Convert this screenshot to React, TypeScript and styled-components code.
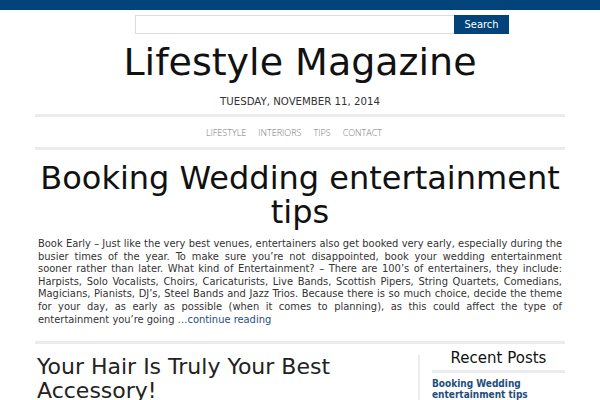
import React from "react";
import styled, { createGlobalStyle } from "styled-components";

const Global = createGlobalStyle`
  html, body { margin: 0; padding: 0; background: #fff; }
  body { font-family: "DejaVu Sans", "Liberation Sans", sans-serif; color: #111; }
  * { box-sizing: border-box; }
`;

const condensed = `"DejaVu Sans Condensed", "DejaVu Sans", sans-serif`;

const TopBar = styled.div`
  height: 10px;
  background: #024379;
`;

const Wrapper = styled.div`
  width: 530px;
  margin: 0 auto;
`;

const SearchForm = styled.form`
  display: flex;
  margin: 5px 0 0 100px;
  height: 19px;
`;

const SearchInput = styled.input`
  width: 319px;
  height: 19px;
  border: 1px solid #ddd;
  border-right: none;
  padding: 0 4px;
  outline: none;
`;

const SearchButton = styled.button`
  width: 55px;
  height: 19px;
  border: none;
  background: #024379;
  color: #fff;
  font-family: ${condensed};
  font-stretch: condensed;
  font-size: 11px;
  padding: 0;
  cursor: pointer;
`;

const SiteTitle = styled.h1`
  margin: 7px 0 0;
  font-size: 38px;
  font-weight: normal;
  line-height: 43px;
  text-align: center;
  color: #111;
`;

const DateLine = styled.div`
  margin-top: 12px;
  font-size: 10.2px;
  line-height: 12px;
  text-align: center;
  color: #333;
  text-transform: uppercase;
`;

const Rule = styled.div<{ $mt?: number }>`
  height: 3px;
  background: #ececec;
  margin-top: ${(p) => p.$mt ?? 0}px;
`;

const Nav = styled.nav`
  display: flex;
  justify-content: center;
  gap: 12px;
  height: 30px;
  align-items: center;
  padding-right: 12px;
`;

const NavLink = styled.a`
  font-family: "Open Sans", "Liberation Sans", sans-serif;
  font-weight: 300;
  font-size: 9px;
  color: #777;
  text-decoration: none;
  text-transform: uppercase;
`;

const Post = styled.article`
  padding: 0 3px;
`;

const PostTitle = styled.h2`
  margin: 11px 0 0;
  font-size: 32px;
  font-weight: normal;
  line-height: 34px;
  text-align: center;
  color: #111;
`;

const PostBody = styled.p`
  margin: 9px 0 0;
  font-family: ${condensed};
  font-stretch: condensed;
  font-size: 11px;
  line-height: 12.6px;
  text-align: justify;
  color: #333;
`;

const NoBreak = styled.span`
  white-space: nowrap;
`;

const More = styled.a`
  color: #1e4e7e;
  text-decoration: none;
`;

const Columns = styled.div`
  display: flex;
  align-items: flex-start;
  margin-top: 7px;
`;

const MainCol = styled.div`
  width: 385px;
  margin-top: 4px;
  border-right: 2px solid #ececec;
  padding-left: 2px;
`;

const SecondTitle = styled.h2`
  margin: 0;
  font-size: 22px;
  font-weight: normal;
  line-height: 24px;
  color: #222;
`;

const Sidebar = styled.aside`
  flex: 1;
  margin-left: 12px;
`;

const WidgetTitle = styled.h3`
  margin: 0;
  font-size: 15px;
  font-weight: normal;
  line-height: 15px;
  padding-bottom: 4px;
  text-align: center;
  color: #111;
  border-bottom: 3px solid #ececec;
`;

const WidgetLink = styled.a`
  display: block;
  margin-top: 5px;
  font-family: ${condensed};
  font-stretch: condensed;
  font-size: 10px;
  line-height: 11px;
  font-weight: bold;
  color: #1e4e7e;
  text-decoration: none;
`;

export default function App() {
  return (
    <>
      <Global />
      <TopBar />
      <Wrapper>
        <SearchForm onSubmit={(e) => e.preventDefault()}>
          <SearchInput type="text" />
          <SearchButton type="submit">Search</SearchButton>
        </SearchForm>
        <SiteTitle>Lifestyle Magazine</SiteTitle>
        <DateLine>Tuesday, November 11, 2014</DateLine>
        <Rule $mt={6} />
        <Nav>
          <NavLink href="#">Lifestyle</NavLink>
          <NavLink href="#">Interiors</NavLink>
          <NavLink href="#">Tips</NavLink>
          <NavLink href="#">Contact</NavLink>
        </Nav>
        <Rule />
        <Post>
          <PostTitle>Booking Wedding entertainment tips</PostTitle>
          <PostBody>
            Book Early – Just like the very best venues, entertainers also get booked very early, especially during the busier times of the year. To make sure you’re not disappointed, book your wedding entertainment <NoBreak>sooner rather</NoBreak> than later. What kind of Entertainment? – There are 100’s of entertainers, they include: Harpists, Solo Vocalists, Choirs, Caricaturists, Live Bands, Scottish Pipers, String Quartets, Comedians, Magicians, Pianists, DJ’s, Steel Bands and Jazz Trios. Because there is so much choice, decide the theme for your day, as early as possible (when it comes to planning), as this could affect the type of entertainment you’re going <More href="#">…continue reading</More>
          </PostBody>
        </Post>
        <Rule $mt={15} />
        <Columns>
          <MainCol>
            <SecondTitle>Your Hair Is Truly Your Best Accessory!</SecondTitle>
          </MainCol>
          <Sidebar>
            <WidgetTitle>Recent Posts</WidgetTitle>
            <WidgetLink href="#">Booking Wedding entertainment tips</WidgetLink>
          </Sidebar>
        </Columns>
      </Wrapper>
    </>
  );
}
